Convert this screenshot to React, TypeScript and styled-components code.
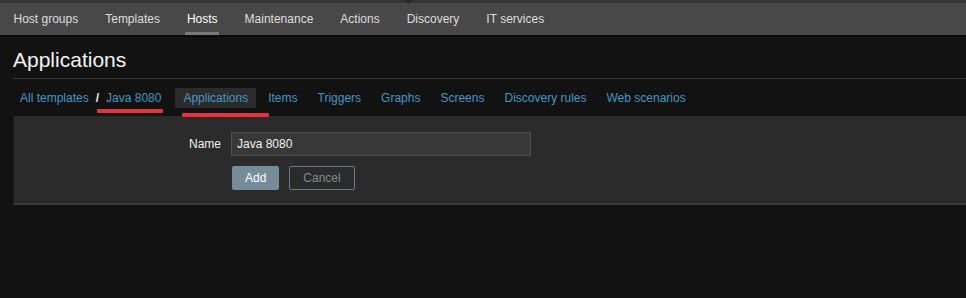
import React from "react";
import styled, { createGlobalStyle, css } from "styled-components";

const Global = createGlobalStyle`
  html, body {
    margin: 0;
    padding: 0;
    background: #121212;
  }
  body {
    font-family: "Liberation Sans", Arial, sans-serif;
    font-size: 12px;
    color: #f2f2f2;
  }
  * { box-sizing: border-box; }
`;

const Page = styled.div`
  position: relative;
  width: 966px;
  height: 298px;
  overflow: hidden;
  background: #121212;
`;

const TopNav = styled.nav`
  position: relative;
  display: flex;
  height: 37px;
  background: #484848;
  border-top: 3px solid #353535;
  border-bottom: 2px solid #0b0b0b;
`;

const Notch = styled.span`
  position: absolute;
  top: -3px;
  left: 404px;
  width: 0;
  height: 0;
  border-left: 5px solid transparent;
  border-right: 5px solid transparent;
  border-top: 4px solid #2a2a2a;
`;

const NavItem = styled.a<{ $active?: boolean }>`
  position: relative;
  display: flex;
  align-items: center;
  padding: 0 13.5px;
  height: 32px;
  color: ${(p) => (p.$active ? "#ffffff" : "#dedede")};
  text-decoration: none;
  white-space: nowrap;
  ${(p) =>
    p.$active &&
    css`
      &::after {
        content: "";
        position: absolute;
        left: 12px;
        right: 12px;
        bottom: 0;
        height: 3px;
        background: #7a7a7a;
      }
    `}
`;

const TitleBar = styled.header`
  margin-left: 13px;
  height: 42px;
  padding-top: 11px;
  border-bottom: 1px solid #383838;
`;

const Title = styled.h1`
  margin: 0;
  font-size: 21px;
  font-weight: normal;
  line-height: normal;
  color: #f2f2f2;
`;

const TabRow = styled.div`
  display: flex;
  align-items: center;
  height: 37px;
  padding-left: 13px;
`;

const Crumb = styled.a`
  padding: 0 7px;
  color: #4796c4;
  text-decoration: none;
  white-space: nowrap;
`;

const Sep = styled.span`
  color: #f2f2f2;
  font-weight: bold;
`;

const Tabs = styled.ul`
  display: flex;
  gap: 4px;
  list-style: none;
  margin: 0 0 0 7px;
  padding: 0;
`;

const Tab = styled.li<{ $selected?: boolean }>`
  height: 20px;
  line-height: 20px;
  padding: 0 8px;
  color: #4796c4;
  white-space: nowrap;
  background: ${(p) => (p.$selected ? "#2b2b2b" : "transparent")};
`;

const FormPanel = styled.section`
  margin-left: 13px;
  height: 89px;
  padding: 16px 0 0;
  background: #2b2b2b;
  border-left: 1px solid #1c1c1c;
  border-bottom: 2px solid #393939;
`;

const FormGrid = styled.div`
  display: grid;
  grid-template-columns: 217px auto;
  row-gap: 10px;
  align-items: center;
`;

const Label = styled.label`
  text-align: right;
  padding-right: 10px;
  color: #f2f2f2;
`;

const TextInput = styled.input`
  width: 300px;
  height: 24px;
  padding: 0 5px;
  background: #383838;
  border: 1px solid #4f4f4f;
  color: #f2f2f2;
  font-family: inherit;
  font-size: 12px;
  outline: none;
`;

const ButtonRow = styled.div`
  grid-column: 2;
  display: flex;
  gap: 10px;
  padding-left: 1px;
`;

const Button = styled.button<{ $alt?: boolean }>`
  height: 24px;
  padding: 0 12px;
  border-radius: 2px;
  font-family: inherit;
  font-size: 12px;
  cursor: pointer;
  border: 1px solid ${(p) => (p.$alt ? "#6b7a82" : "#768d99")};
  background: ${(p) => (p.$alt ? "transparent" : "#768d99")};
  color: ${(p) => (p.$alt ? "#7d8c94" : "#ffffff")};
  ${(p) => p.$alt && css`padding: 0 13px;`}
`;

const Annotation = styled.span<{ $left: number; $top: number; $width: number }>`
  position: absolute;
  left: ${(p) => p.$left}px;
  top: ${(p) => p.$top}px;
  width: ${(p) => p.$width}px;
  height: 4px;
  background: #e8333c;
  border-radius: 1px;
`;

const navItems = [
  "Host groups",
  "Templates",
  "Hosts",
  "Maintenance",
  "Actions",
  "Discovery",
  "IT services",
];

const tabs = [
  "Applications",
  "Items",
  "Triggers",
  "Graphs",
  "Screens",
  "Discovery rules",
  "Web scenarios",
];

export default function App() {
  return (
    <>
      <Global />
      <Page>
        <TopNav>
          <Notch />
          {navItems.map((n) => (
            <NavItem key={n} $active={n === "Hosts"}>
              {n}
            </NavItem>
          ))}
        </TopNav>
        <TitleBar>
          <Title>Applications</Title>
        </TitleBar>
        <TabRow>
          <Crumb>All templates</Crumb>
          <Sep>/</Sep>
          <Crumb>Java 8080</Crumb>
          <Tabs>
            {tabs.map((t) => (
              <Tab key={t} $selected={t === "Applications"}>
                {t}
              </Tab>
            ))}
          </Tabs>
        </TabRow>
        <FormPanel>
          <FormGrid>
            <Label htmlFor="appname">Name</Label>
            <TextInput id="appname" defaultValue="Java 8080" />
            <ButtonRow>
              <Button>Add</Button>
              <Button $alt>Cancel</Button>
            </ButtonRow>
          </FormGrid>
        </FormPanel>
        <Annotation $left={97} $top={109} $width={66} />
        <Annotation $left={182} $top={113} $width={87} />
      </Page>
    </>
  );
}
